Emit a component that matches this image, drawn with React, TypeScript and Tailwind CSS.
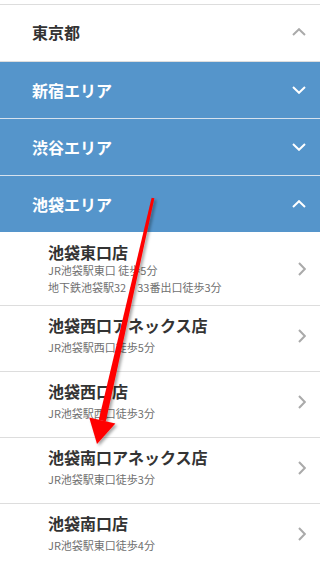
import React from "react";

const font = { fontFamily: '"Noto Sans CJK JP", "Noto Sans", sans-serif' };

type Area = { name: string; open: boolean };

const areas: Area[] = [
  { name: "新宿エリア", open: false },
  { name: "渋谷エリア", open: false },
  { name: "池袋エリア", open: true },
];

type Shop = { name: string; access: string[] };

const shops: Shop[] = [
  { name: "池袋東口店", access: ["JR池袋駅東口 徒歩5分", "地下鉄池袋駅32・33番出口徒歩3分"] },
  { name: "池袋西口アネックス店", access: ["JR池袋駅西口徒歩5分"] },
  { name: "池袋西口店", access: ["JR池袋駅西口徒歩3分"] },
  { name: "池袋南口アネックス店", access: ["JR池袋駅東口徒歩3分"] },
  { name: "池袋南口店", access: ["JR池袋駅東口徒歩4分"] },
];

function Chevron({ up, color }: { up: boolean; color: string }) {
  return (
    <svg width="14" height="8" viewBox="0 0 14 8" fill="none">
      <polyline
        points={up ? "1,7 7,1.2 13,7" : "1,1 7,6.8 13,1"}
        stroke={color}
        strokeWidth="2"
      />
    </svg>
  );
}

function ChevronRight() {
  return (
    <svg width="8" height="14" viewBox="0 0 8 14" fill="none">
      <polyline points="1,1 6.8,7 1,13" stroke="#aaaaaa" strokeWidth="2" />
    </svg>
  );
}

// red annotation arrow drawn over the list
function Arrow() {
  return (
    <svg className="pointer-events-none absolute left-0 top-0" width="320" height="567" viewBox="0 0 320 567">
      <defs>
        <filter id="shadow" x="-50%" y="-10%" width="200%" height="120%">
          <feDropShadow dx="2" dy="2" stdDeviation="1.6" floodColor="#000" floodOpacity="0.35" />
        </filter>
      </defs>
      <g filter="url(#shadow)" fill="#ff0000">
        <polygon points="151.6,197.7 154.4,198.3 105.8,421.4 98.8,419.8" />
        <polygon points="89.2,417.6 115.4,423.6 97,444" />
      </g>
    </svg>
  );
}

export default function App() {
  return (
    <div className="relative min-h-[567px] w-[320px] overflow-hidden bg-white" style={font}>
      <div className="pt-1">
        <div className="flex h-[58px] items-center justify-between border-y border-[#dddddd] pb-[3px] pl-8 pr-[14px]">
          <span className="text-[16px] font-bold text-[#333333]">東京都</span>
          <Chevron up color="#aaaaaa" />
        </div>

        {areas.map((area, i) => (
          <div
            key={area.name}
            className={
              i < areas.length - 1
                ? "flex h-[57px] items-center justify-between border-b border-[#d6e2ee] bg-[#5595cb] pl-8 pr-[14px]"
                : "flex h-[56px] items-center justify-between bg-[#5595cb] pl-8 pr-[14px]"
            }
          >
            <span className="text-[16px] font-bold text-white">{area.name}</span>
            <Chevron up={area.open} color="#ffffff" />
          </div>
        ))}

        {shops.map((shop, i) => (
          <div
            key={shop.name}
            className={
              i === 0
                ? "flex items-center justify-between border-b border-[#dddddd] pb-[9px] pl-12 pr-[14px] pt-[10px]"
                : "flex items-center justify-between border-b border-[#dddddd] pb-[15px] pl-12 pr-[14px] pt-[9px]"
            }
          >
            <div>
              <p className="text-[16px] font-bold leading-5 text-[#333333]">{shop.name}</p>
              <div className={i === 0 ? "" : "mt-1"}>
                {shop.access.map((line) => (
                  <p key={line} className="text-[11px] leading-[17px] text-[#6f6f6f]">
                    {line}
                  </p>
                ))}
              </div>
            </div>
            <ChevronRight />
          </div>
        ))}
      </div>
      <Arrow />
    </div>
  );
}
